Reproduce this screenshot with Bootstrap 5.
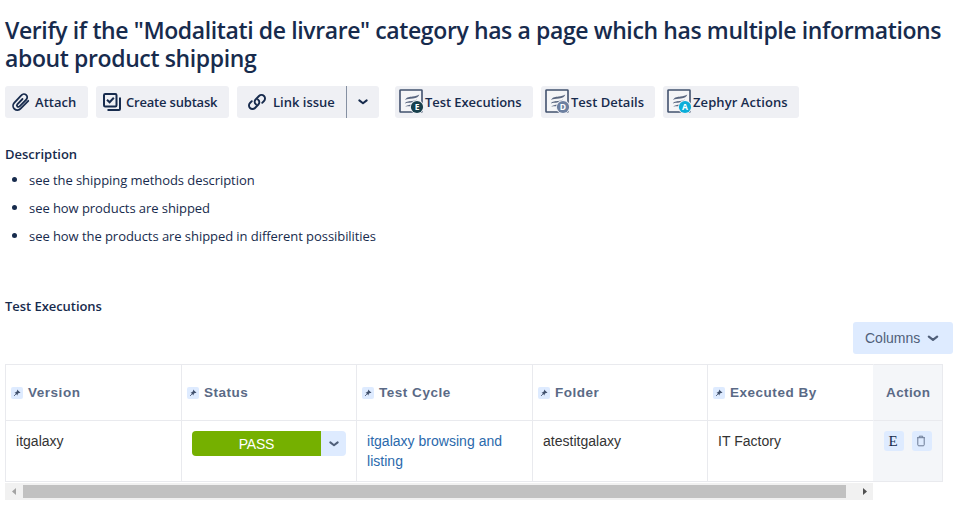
<!DOCTYPE html>
<html lang="en">
<head>
<meta charset="utf-8">
<meta name="viewport" content="width=device-width, initial-scale=1">
<title>Test issue</title>
<link href="https://cdn.jsdelivr.net/npm/bootstrap@5.3.0/dist/css/bootstrap.min.css" rel="stylesheet">
<style>
body{font-family:"Open Sans","Noto Sans",sans-serif;color:#172b4d;font-size:13px;overflow:hidden}
.issue{padding:16px 10px 0 5px}
.issue-title{font-size:23px;line-height:28px;font-weight:600;letter-spacing:-.385px;white-space:nowrap;margin:0 0 14px}
.tool{height:32px;background:#eff0f4;border-radius:3px;color:#172b4d;font-size:13px;font-weight:600;line-height:32px;white-space:nowrap;border:0;padding:0;display:flex;align-items:center}
.tool svg{flex:none}
.tool-attach{width:83px;letter-spacing:.05px}
.tool-attach span{margin-left:2px}
.tool-subtask{width:133px;letter-spacing:-.19px}
.tool-subtask span{margin-left:2px}
.tool-link{width:109px}
.tool-link svg{margin-left:8px}
.tool-more{width:33px;border-left:1px solid #8590a2}
.tool-exec{width:138px;letter-spacing:-.07px}
.tool-details{width:114px}
.tool-zephyr{width:136px;letter-spacing:.08px}
.sec{font-size:13px;font-weight:600;line-height:20px;margin:0}
.sec-desc{margin-top:26px}
.sec-runs{margin-top:50px;letter-spacing:-.05px}
.steps{list-style:none;margin:6px 0 0;padding:0;letter-spacing:-.06px}
.steps li{line-height:20px;margin-bottom:8px;display:flex;align-items:center;padding-left:7px}
.steps li::before{content:"";width:5px;height:5px;border-radius:50%;background:#172b4d;margin-right:12px;margin-top:-2px}
.runs{font-family:"Liberation Sans",Arial,sans-serif;font-size:14px;padding-top:6px}
.cols-btn{width:100px;height:32px;background:#deebff;border-radius:3px;color:#505f79;font-size:14px;letter-spacing:0;padding:0 13px 0 12px;border:0}
.grid-table{width:938px;table-layout:fixed;border-collapse:separate;border-spacing:0;margin:10px 0 0;border-right:1px solid #e9eaee;border-bottom:1px solid #e9eaee;line-height:20px;color:#333}
.grid-table th,.grid-table td{border-left:1px solid #e9eaee;border-top:1px solid #e9eaee;padding:0}
.grid-table th{height:56px;vertical-align:middle;padding:1px 0 0 5px;color:#5a6a86;font-size:13.5px;letter-spacing:.52px}
.grid-table td{height:61px;vertical-align:top;padding:10px 10px 0 10px;letter-spacing:.02px}
.grid-table .act{background:#f4f6f9;border-left-color:#f4f6f9}
.grid-table th.act{padding-left:12px;letter-spacing:.4px}
.c-a{width:176px}.c-b{width:175px}.c-c{width:166px}
.pin{width:12px;height:12px;background:#deebff;border-radius:2px;margin-right:5px;margin-top:-1px;flex:none}
.state{height:25px;width:154px}
.state-name{background:#75b000;color:#fff;width:129px;border-radius:4px 0 0 4px;line-height:26px;text-align:center;letter-spacing:-.2px}
.state-arrow{background:#deebff;color:#505f79;width:25px;border-radius:0 4px 4px 0}
.mini{width:20px;height:20px;background:#deebff;border-radius:3px;color:#172b4d;font:15px/20px "Liberation Serif",serif;padding-right:2px}
.cycle{color:#2a69ac;text-decoration:none}
.hbar{width:868px;height:17px;background:#f1f1f1;margin-top:1px}
.hbar-thumb{width:823px;height:13px;background:#c1c1c1}
</style>
<script src="https://cdn.jsdelivr.net/npm/bootstrap@5.3.0/dist/js/bootstrap.bundle.min.js"></script>
</head>
<body>
<svg class="d-none" aria-hidden="true">
<symbol id="pin" viewBox="0 0 12 12"><path d="M6 2.400 9.500 5.700 8.600 6 7.800 6 6.700 7.100 6.500 8.600 3.600 5.600 4.900 5.300 6.100 4z" fill="#42526e"/><path d="M5.200 6.800 3 9" stroke="#42526e" stroke-width=".8"/></symbol>
<symbol id="chev" viewBox="0 0 12 8"><path d="M2.300 2.400 6 5.300 9.700 2.400" fill="none" stroke="currentColor" stroke-width="2" stroke-linecap="round" stroke-linejoin="round"/></symbol>
<symbol id="zeph" viewBox="0 0 26 26"><rect x="1" y="1" width="22" height="22" rx=".6" fill="#f4f5f7" stroke="#42526e" stroke-width="1.600"/><path d="M6 11C8 7.700 10.500 7.900 13.500 7.500 16.500 7.100 18.500 6.400 20.300 5.400 19.800 7.800 17.500 8.900 14 9.400 10.500 9.900 8.300 9.700 6 11z" fill="#5a6780"/><path d="M5.500 14.500C7.700 11.900 10.500 12.300 13 12 15 11.700 16.500 11.200 18 10.400 17 12.600 15 13.200 12.500 13.500 9.800 13.800 7.900 13.500 5.500 14.500zM6.200 17.700C7.800 15.900 10 15.900 13 15.400 12.200 17 11 17.200 9.800 17.200 8.500 17.300 7.400 17.100 6.200 17.700z" fill="#5a6780"/></symbol>
</svg>
<main class="issue">
<h1 class="issue-title">Verify if the "Modalitati de livrare" category has a page which has multiple informations<br>about product shipping</h1>
<div class="d-flex">
<button class="tool tool-attach me-2"><svg class="ms-1" width="24" height="24" viewBox="0 0 24 24"><path d="M19.300 10.800 11.600 18.700A4.200 4.200 0 0 1 5.200 12.900L12.500 5.200A3.100 3.100 0 0 1 17.400 9.500L10.600 16.400A1.500 1.500 0 0 1 8.300 14.300L13.500 9" fill="none" stroke="#172b4d" stroke-width="1.800" stroke-linecap="round" stroke-linejoin="round"/></svg><span>Attach</span></button>
<button class="tool tool-subtask me-2"><svg class="ms-1" width="24" height="24" viewBox="0 0 24 24"><rect x="4" y="4" width="12.500" height="12.500" rx="1.200" fill="none" stroke="#172b4d" stroke-width="2"/><path d="M7 9.800 9.600 12.300 13.800 7.800" fill="none" stroke="#172b4d" stroke-width="2"/><path d="M20 7.500V19a1 1 0 0 1-1 1H7.500" fill="none" stroke="#172b4d" stroke-width="2"/></svg><span>Create subtask</span></button>
<div class="d-flex me-3"><button class="tool tool-link rounded-end-0"><svg width="24" height="24" viewBox="0 0 24 24"><path d="M10.900 14.300A3.200 3.200 0 0 1 10.600 9.500L14 6A3.500 3.500 0 0 1 19 11L17.200 12.800M13.100 9.700A3.200 3.200 0 0 1 13.400 14.500L10 18A3.500 3.500 0 0 1 5 13L6.800 11.200" fill="none" stroke="#172b4d" stroke-width="1.900" stroke-linecap="round"/></svg><span class="ms-1">Link issue</span></button><button class="tool tool-more rounded-start-0 justify-content-center" aria-label="More"><svg width="12" height="8"><use href="#chev"/></svg></button></div>
<button class="tool tool-exec me-2"><svg class="ms-1" width="26" height="26" viewBox="0 0 26 26"><use href="#zeph"/><circle cx="18" cy="18" r="7" fill="#eff0f4"/><circle cx="18" cy="18" r="6.100" fill="#173f4c"/><text x="18" y="21" font-size="8.500" font-weight="700" text-anchor="middle" fill="#fff">E</text></svg><span>Test Executions</span></button>
<button class="tool tool-details me-2"><svg class="ms-1" width="26" height="26" viewBox="0 0 26 26"><use href="#zeph"/><circle cx="18" cy="18" r="7" fill="#eff0f4"/><circle cx="18" cy="18" r="6.100" fill="#6c7fa0"/><text x="18" y="21" font-size="8.500" font-weight="700" text-anchor="middle" fill="#fff">D</text></svg><span>Test Details</span></button>
<button class="tool tool-zephyr"><svg class="ms-1" width="26" height="26" viewBox="0 0 26 26"><use href="#zeph"/><circle cx="18" cy="18" r="7" fill="#eff0f4"/><circle cx="18" cy="18" r="6.100" fill="#0badd9"/><text x="18" y="21" font-size="8.500" font-weight="700" text-anchor="middle" fill="#fff">A</text></svg><span>Zephyr Actions</span></button>
</div>
<h2 class="sec sec-desc">Description</h2>
<ul class="steps"><li>see the shipping methods description</li><li>see how products are shipped</li><li>see how the products are shipped in different possibilities</li></ul>
<h2 class="sec sec-runs">Test Executions</h2>
<section class="runs">
<div class="d-flex justify-content-end"><button class="cols-btn d-flex align-items-center justify-content-between">Columns<svg width="14" height="9"><use href="#chev"/></svg></button></div>
<table class="grid-table">
<colgroup><col class="c-a"><col class="c-b"><col class="c-a"><col class="c-b"><col class="c-c"><col></colgroup>
<thead><tr>
<th><div class="d-flex align-items-center"><svg class="pin"><use href="#pin"/></svg>Version</div></th>
<th><div class="d-flex align-items-center"><svg class="pin"><use href="#pin"/></svg>Status</div></th>
<th><div class="d-flex align-items-center"><svg class="pin"><use href="#pin"/></svg>Test Cycle</div></th>
<th><div class="d-flex align-items-center"><svg class="pin"><use href="#pin"/></svg>Folder</div></th>
<th><div class="d-flex align-items-center"><svg class="pin"><use href="#pin"/></svg>Executed By</div></th>
<th class="act">Action</th>
</tr></thead>
<tbody><tr>
<td>itgalaxy</td>
<td><div class="state d-flex"><div class="state-name">PASS</div><div class="state-arrow d-flex align-items-center justify-content-center"><svg width="12" height="8"><use href="#chev"/></svg></div></div></td>
<td><a class="cycle" href="#">itgalaxy browsing and listing</a></td>
<td>atestitgalaxy</td>
<td>IT Factory</td>
<td class="act"><div class="d-flex gap-2"><div class="mini text-center">E</div><div class="mini d-flex align-items-center justify-content-center"><svg width="10" height="12" viewBox="0 0 10 12"><path d="M1 2.700H9M3.300 2.500V1.200H6.700V2.500M1.800 3V9.800Q1.800 10.800 2.800 10.800H7.200Q8.200 10.800 8.200 9.800V3" fill="none" stroke="#6b7a95" stroke-width="1"/></svg></div></div></td>
</tr></tbody>
</table>
<div class="hbar d-flex align-items-center justify-content-between"><svg width="18" height="17"><path d="M11 5V12L7 8.500z" fill="#a3a3a3"/></svg><div class="hbar-thumb"></div><svg width="27" height="17"><path d="M17 5V12L21 8.500z" fill="#505050"/></svg></div>
</section>
</main>
</body>
</html>
